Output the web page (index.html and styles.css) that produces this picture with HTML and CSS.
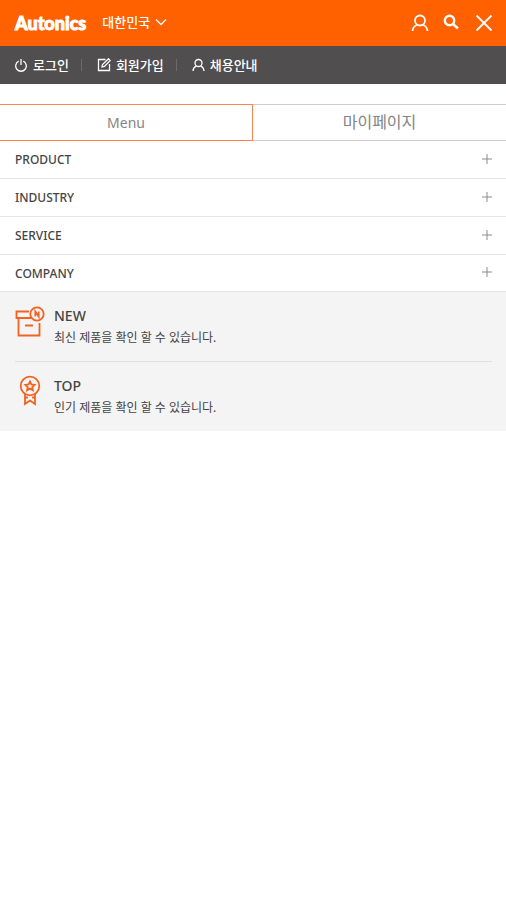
FILE: index.html
```html
<!DOCTYPE html>
<html lang="ko">
<head>
<meta charset="utf-8">
<meta name="viewport" content="width=device-width, initial-scale=1">
<title>Autonics</title>
<link rel="stylesheet" href="styles.css">
</head>
<body>
<header class="header">
  <a class="logo" href="#">Autonics</a>
  <button class="country" type="button">대한민국
    <svg width="12" height="8" viewBox="0 0 12 8"><path d="M1 1.500 6 6.500 11 1.500"/></svg>
  </button>
  <div class="tools">
    <button type="button" aria-label="내 계정"><svg width="18" height="18" viewBox="0 0 18 18"><circle cx="9" cy="6.500" r="5"/><path d="M1.500 17c.2-3 1.900-5 4.300-6M16.500 17c-.2-3-1.900-5-4.300-6"/></svg></button>
    <button type="button" aria-label="검색"><svg class="bold" width="18" height="18" viewBox="0 0 18 18"><circle cx="6.500" cy="6.500" r="4.700"/><path d="m10 10 5 4.500"/></svg></button>
    <button type="button" aria-label="닫기"><svg width="18" height="18" viewBox="0 0 18 18"><path d="m1.500 1.500 15 15m0-15-15 15"/></svg></button>
  </div>
</header>
<nav class="account">
  <a href="#"><svg width="13" height="14" viewBox="0 0 13 14"><path d="M3.700 3.200a5.300 5.300 0 1 0 4.600 0M6 1v6"/></svg>로그인</a>
  <a href="#"><svg width="14" height="14" viewBox="0 0 14 14"><path d="M8.500 1.500H1.500v11h11V6M5 9l.5-2.500L11.500.8l1.700 1.700L7.500 8.500z"/></svg>회원가입</a>
  <a href="#"><svg width="13" height="14" viewBox="0 0 13 14"><circle cx="6.500" cy="5" r="3.500"/><path d="M1 13c.2-2.500 1.300-4 3.300-4.800M12 13c-.2-2.500-1.300-4-3.300-4.800"/></svg>채용안내</a>
</nav>
<main>
  <div class="tabs" role="tablist">
    <button class="tab active" type="button" role="tab" aria-selected="true">Menu</button>
    <button class="tab korean" type="button" role="tab" aria-selected="false">마이페이지</button>
  </div>
  <nav class="menu">
    <button type="button">PRODUCT<svg width="10" height="10" viewBox="0 0 10 10"><path d="M5 0v10M0 5h10"/></svg></button>
    <button type="button">INDUSTRY<svg width="10" height="10" viewBox="0 0 10 10"><path d="M5 0v10M0 5h10"/></svg></button>
    <button type="button">SERVICE<svg width="10" height="10" viewBox="0 0 10 10"><path d="M5 0v10M0 5h10"/></svg></button>
    <button type="button">COMPANY<svg width="10" height="10" viewBox="0 0 10 10"><path d="M5 0v10M0 5h10"/></svg></button>
  </nav>
  <section class="promos">
    <a class="promo" href="#">
      <svg width="30" height="32" viewBox="0 0 30 32"><path d="M14 6.500H1.500v6.500H16M3.500 13v17.500h21V18M10 20.500h8"/><circle cx="22" cy="9" r="6.700"/><path d="M20.300 11.500v-5l3.400 5v-5"/></svg>
      <span class="copy"><strong>NEW</strong><span>최신 제품을 확인 할 수 있습니다.</span></span>
    </a>
    <a class="promo" href="#">
      <svg width="30" height="32" viewBox="0 0 30 32"><circle cx="15" cy="11" r="9.300"/><path d="m15 6.500 1.400 2.900 3.200.4-2.300 2.200.6 3.200-2.900-1.600-2.900 1.600.6-3.200-2.300-2.200 3.200-.4zM10 19v10l5-3.500 5 3.500V19M10 22.500h3M17 22.500h3"/></svg>
      <span class="copy"><strong>TOP</strong><span>인기 제품을 확인 할 수 있습니다.</span></span>
    </a>
  </section>
</main>
</body>
</html>
```
FILE: styles.css
```css
* { box-sizing: border-box; }
body { margin: 0; background: #fff; color: #444; font-family: "Noto Sans", "Noto Sans CJK KR", sans-serif; }
button { margin: 0; padding: 0; border: 0; background: none; color: inherit; font: inherit; cursor: pointer; }
a { color: inherit; text-decoration: none; }
svg { display: block; flex: none; fill: none; stroke: currentColor; stroke-width: 1.3; }

.header { display: flex; align-items: center; height: 46px; padding: 0 13px 0 15px; background: #ff6000; color: #fff; }
.logo { font: 900 18px/24px Lato, sans-serif; -webkit-text-stroke: 1px #fff; }
.country { display: flex; align-items: center; gap: 5px; margin-left: 16px; padding-bottom: 2px; font-size: 13px; font-weight: 500; line-height: 20px; }
.tools { display: flex; align-items: center; gap: 14px; margin-left: auto; }
.tools svg { stroke-width: 1.8; }
.tools .bold { stroke-width: 2.4; }

.account { display: flex; align-items: center; height: 38px; padding: 0 15px 1px; background: #504e4f; color: #fff; font-size: 13px; font-weight: 500; line-height: 20px; }
.account a { display: flex; align-items: center; gap: 5px; }
.account a + a::before { content: ""; width: 1px; height: 12px; margin: 0 10px 0 12px; background: #6b696a; }

.tabs { display: grid; grid-template-columns: 1fr 1fr; margin-top: 20px; }
.tab { height: 37px; border: solid #ccc; border-width: 1px 0; color: #858585; font-size: 14px; }
.tab.korean { padding-bottom: 3px; font-size: 16px; }
.tab.active { border-color: #ff8050; border-right-width: 1px; }

.menu button { display: flex; align-items: center; justify-content: space-between; width: 100%; height: 38px; padding: 0 14px 0 15px; border-bottom: 1px solid #e6e6e6; font-size: 12px; font-weight: 500; }
.menu button:last-child { height: 37px; }
.menu svg { margin-bottom: 2px; stroke: #8b8b8b; stroke-width: 1; }

.promos { padding: 0 14px 0 15px; background: #f4f4f4; }
.promo { display: flex; gap: 9px; height: 69px; padding-top: 13px; }
.promo + .promo { height: 70px; border-top: 1px solid #e0e0e0; }
.promo svg { color: #f26322; stroke-width: 1.8; }
.copy { display: flex; flex-direction: column; font-size: 12px; line-height: 22px; }
.copy strong { font-size: 14px; font-weight: 500; }
```
